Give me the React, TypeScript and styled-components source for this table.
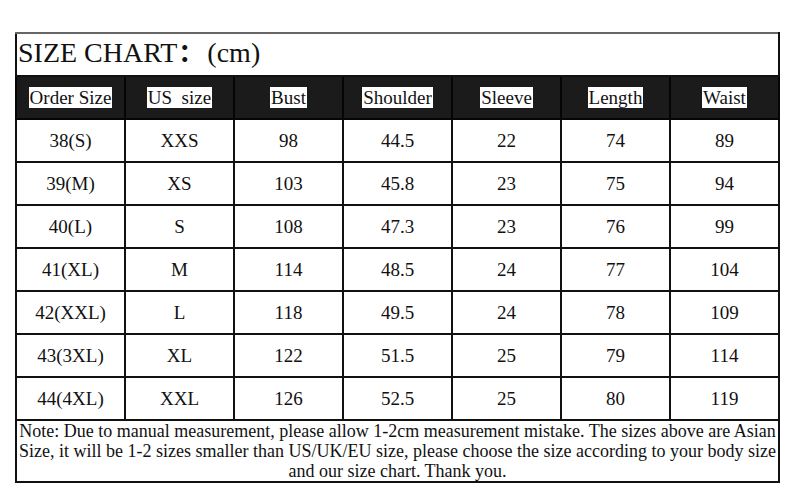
import styled, { createGlobalStyle } from "styled-components";

const rows = [
    ["38(S)", "XXS", "98", "44.5", "22", "74", "89"],
    ["39(M)", "XS", "103", "45.8", "23", "75", "94"],
    ["40(L)", "S", "108", "47.3", "23", "76", "99"],
    ["41(XL)", "M", "114", "48.5", "24", "77", "104"],
    ["42(XXL)", "L", "118", "49.5", "24", "78", "109"],
    ["43(3XL)", "XL", "122", "51.5", "25", "79", "114"],
    ["44(4XL)", "XXL", "126", "52.5", "25", "80", "119"],
];

const headers = ["Order Size", "US\u00a0\u00a0size", "Bust", "Shoulder", "Sleeve", "Length", "Waist"];

function App() {
    return (
        <>
        <GlobalStyle />
        <Page>
            <Chart>
                <tbody>
                    <TitleRow>
                        <TitleCell colSpan={7}>
                            SIZE CHART<Colon>：</Colon>(cm)
                        </TitleCell>
                    </TitleRow>
                    <BodyRow>
                        {headers.map((h) => (
                            <HeadCell key={h}>
                                <HeadLabel>{h}</HeadLabel>
                            </HeadCell>
                        ))}
                    </BodyRow>
                    {rows.map((row) => (
                        <BodyRow key={row[0]}>
                            {row.map((v, i) => (
                                <DataCell key={i}>{v}</DataCell>
                            ))}
                        </BodyRow>
                    ))}
                    <tr>
                        <NoteCell colSpan={7}>
                            Note: Due to manual measurement, please allow 1-2cm measurement mistake. The sizes above are Asian
                            Size, it will be 1-2 sizes smaller than US/UK/EU size, please choose the size according to your body size
                            and our size chart. Thank you.
                        </NoteCell>
                    </tr>
                </tbody>
            </Chart>
        </Page>
        </>
    );
}

export default App;

const GlobalStyle = createGlobalStyle`
    html, body {
        margin: 0;
        background: #ffffff;
    }
`;

const Page = styled.div`
    width: 800px;
    height: 504px;
    padding: 32px 0 0 15px;
    box-sizing: border-box;
    font-family: "Liberation Serif", "Times New Roman", serif;
    color: #111;
`;

const Chart = styled.table`
    width: 765px;
    border-collapse: collapse;
    table-layout: fixed;
    border: 2px solid #111;
    border-top-color: #666;
`;

const TitleRow = styled.tr`
    height: 43px;
`;

const BodyRow = styled.tr`
    height: 43px;
`;

const TitleCell = styled.td`
    padding: 0 0 3px 1px;
    font-size: 28px;
    line-height: 30px;
    vertical-align: middle;
    border-bottom: 2px solid #111;
    white-space: nowrap;
`;

const Colon = styled.span`
    margin: 0 3px 0 1px;
    font-family: "Noto Sans CJK SC", sans-serif;
    font-size: 26px;
    line-height: 1;
    font-weight: 700;
`;

const HeadCell = styled.td`
    padding: 0;
    background: #1b1b1b;
    border: 2px solid #050505;
    text-align: center;
`;

const HeadLabel = styled.span`
    display: inline-block;
    background: #fff;
    color: #111;
    font-size: 19px;
    line-height: 21px;
    padding: 0 1px;
`;

const DataCell = styled.td`
    padding: 0;
    border: 2px solid #111;
    text-align: center;
    font-size: 19px;
`;

const NoteCell = styled.td`
    height: 59px;
    padding: 0 1px;
    border: 2px solid #111;
    font-size: 18px;
    line-height: 20px;
    text-align: center;
    vertical-align: top;
`;
